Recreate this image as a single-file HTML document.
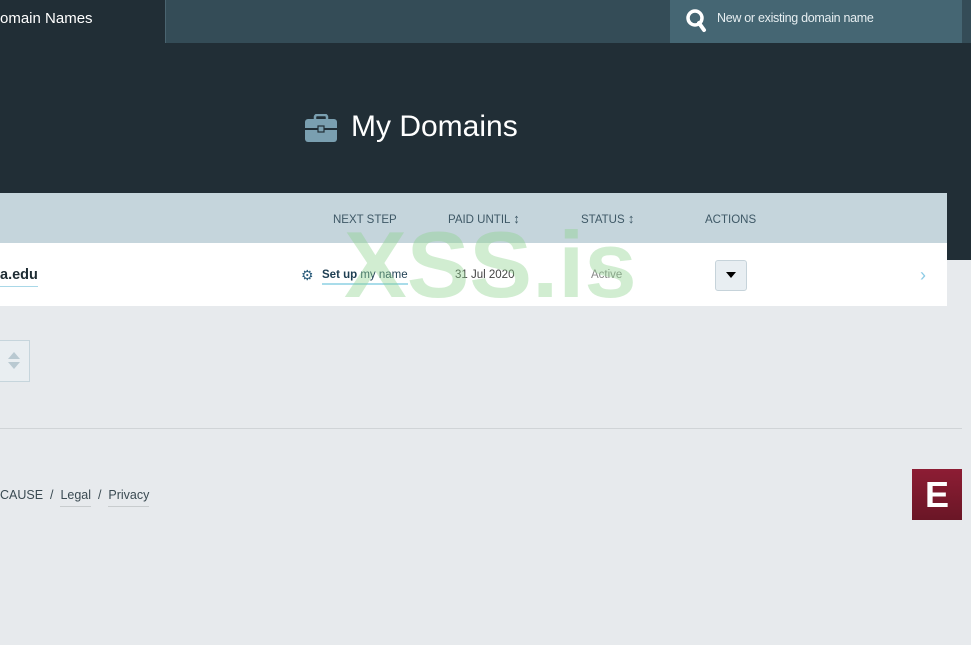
<!DOCTYPE html>
<html><head><style>
*{margin:0;padding:0;box-sizing:border-box}
body{width:971px;height:645px;overflow:hidden;background:#e7eaed;font-family:"Liberation Sans",sans-serif;position:relative}
.a{position:absolute}
</style></head><body>
<div class="a" style="left:0;top:0;width:971px;height:260px;background:#212e36"></div>
<div class="a" style="left:165px;top:0;width:806px;height:43px;background:#344c57;border-left:1px solid #4a6470"></div>
<div class="a" style="left:0;top:10px;color:#fff;font-size:15px">omain Names</div>
<div class="a" style="left:670px;top:0;width:292px;height:43px;background:#456673"></div>
<svg class="a" style="left:685px;top:8px" width="24" height="26" viewBox="0 0 24 26"><circle cx="10" cy="10" r="7" fill="none" stroke="#fff" stroke-width="3.5"/><path d="M14 15l5 7" stroke="#fff" stroke-width="4" stroke-linecap="round"/></svg>
<div class="a" style="left:717px;top:11px;color:#e6eef1;font-size:12.5px;letter-spacing:-0.3px">New or existing domain name</div>
<svg class="a" style="left:305px;top:114px" width="32" height="28" viewBox="0 0 32 28"><rect x="10" y="1" width="12" height="6" rx="2" fill="none" stroke="#7a9fb0" stroke-width="2.5"/><rect x="0" y="5" width="32" height="23" rx="3" fill="#7a9fb0"/><rect x="0" y="14" width="32" height="2" fill="#212e36"/><rect x="13" y="12" width="6" height="6" fill="#7a9fb0" stroke="#212e36" stroke-width="1.2"/></svg>
<div class="a" style="left:351px;top:110px;color:#fff;font-size:30px">My Domains</div>
<div class="a" style="left:0;top:193px;width:947px;height:50px;background:#c5d5dc"></div>
<div class="a" style="top:214px;left:333px;font-size:11.5px;color:#3e5866">NEXT STEP</div>
<div class="a" style="top:211px;left:448px;font-size:11.5px;color:#3e5866">PAID UNTIL <b style="font-size:13px">↕</b></div>
<div class="a" style="top:211px;left:581px;font-size:11.5px;color:#3e5866">STATUS <b style="font-size:13px">↕</b></div>
<div class="a" style="top:214px;left:705px;font-size:11.5px;color:#3e5866">ACTIONS</div>
<div class="a" style="left:0;top:243px;width:947px;height:63px;background:#fff"></div>
<div class="a" style="left:0;top:267px;font-size:14.5px;font-weight:bold;color:#1e2c33;border-bottom:1px solid #a9d8e8;padding-bottom:3px">a.edu</div>
<div class="a" style="left:301px;top:267px;font-size:14px;color:#2b5c7b">⚙</div>
<div class="a" style="left:322px;top:269px;font-size:11.5px;color:#1e3e52;border-bottom:2px solid #a9dcea;padding-bottom:2px"><b>Set up</b> my name</div>
<div class="a" style="left:455px;top:269px;font-size:11.5px;color:#444">31 Jul 2020</div>
<div class="a" style="left:591px;top:269px;font-size:11.5px;color:#888">Active</div>
<div class="a" style="left:715px;top:260px;width:32px;height:31px;background:#e8eef2;border:1px solid #c6d3da;border-radius:3px"></div>
<div class="a" style="left:726px;top:272px;width:0;height:0;border-left:5px solid transparent;border-right:5px solid transparent;border-top:6px solid #000"></div>
<div class="a" style="left:920px;top:265px;font-size:18px;color:#8ccbe5">›</div>
<div class="a" style="left:344px;top:211px;font-size:94px;font-weight:bold;color:rgba(140,210,140,0.4)">XSS.is</div>
<div class="a" style="left:-2px;top:340px;width:32px;height:42px;background:#e9eef1;border:1px solid #c6d5dc"></div>
<div class="a" style="left:8px;top:352px;border-left:6px solid transparent;border-right:6px solid transparent;border-bottom:7px solid #b9c9d1"></div>
<div class="a" style="left:8px;top:362px;border-left:6px solid transparent;border-right:6px solid transparent;border-top:7px solid #b9c9d1"></div>
<div class="a" style="left:0;top:428px;width:962px;height:1px;background:#d0d4d7"></div>
<div class="a" style="left:0;top:488px;font-size:12.5px;color:#3a4a52">CAUSE &nbsp;/&nbsp; <span style="border-bottom:1px solid #c8ccce;padding-bottom:4px">Legal</span> &nbsp;/&nbsp; <span style="border-bottom:1px solid #c8ccce;padding-bottom:4px">Privacy</span></div>
<div class="a" style="left:912px;top:469px;width:50px;height:51px;background:linear-gradient(#8d1d34,#6a1626);color:#fff;font-size:36px;font-weight:bold;text-align:center;line-height:51px">E</div>
</body></html>
